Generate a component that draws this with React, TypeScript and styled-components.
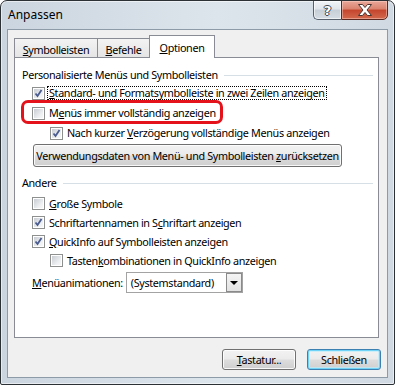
import React from 'react'
import styled, { createGlobalStyle } from 'styled-components'

const Global = createGlobalStyle`
  html, body { margin: 0; padding: 0; background: #fff; }
  body {
    font-family: "Noto Sans", "Open Sans", sans-serif;
    font-size: 10.8px;
    letter-spacing: -0.35px;
    color: #000;
  }
`

const Frame = styled.div`
  width: 395px;
  height: 385px;
  box-sizing: border-box;
  border: 1px solid #2c3136;
  border-radius: 7px 7px 2px 2px;
  background: linear-gradient(to right, #cbd5df, #dde5ec 55%, #d0d9e2);
  box-shadow: inset 0 0 0 1px rgba(255, 255, 255, 0.55);
  display: flex;
  flex-direction: column;
  padding: 0 6px 6px 6px;
  overflow: hidden;
`

const TitleBar = styled.div`
  height: 28px;
  display: flex;
  align-items: flex-start;
  justify-content: space-between;
`

const Title = styled.div`
  margin-top: 6px;
  padding-left: 1px;
  line-height: 16px;
  font-size: 12px;
  letter-spacing: 0;
  color: #000;
`

const CaptionButtons = styled.div`
  display: flex;
  margin-top: -1px;
  height: 20px;
`

const HelpButton = styled.div`
  width: 28px;
  box-sizing: border-box;
  border: 1px solid #56616d;
  border-right: none;
  border-radius: 0 0 0 5px;
  background: linear-gradient(#f2f5f8, #dfe5eb 45%, #c6ced7 50%, #d6dde4);
  box-shadow: inset 0 0 0 1px rgba(255, 255, 255, 0.6);
  display: flex;
  align-items: center;
  justify-content: center;
  font: bold 13px "DejaVu Sans", sans-serif;
  letter-spacing: 0;
  color: #fff;
  text-shadow: 1px 0 #3c4650, -1px 0 #3c4650, 0 1px #3c4650, 0 -1px #3c4650;
`

const CloseButton = styled.div`
  width: 47px;
  box-sizing: border-box;
  border: 1px solid #5a2a22;
  border-radius: 0 0 5px 0;
  background: linear-gradient(#eaa899, #d9826e 45%, #c5452d 50%, #d2694d);
  box-shadow: inset 0 0 0 1px rgba(255, 220, 210, 0.45);
  display: flex;
  align-items: center;
  justify-content: center;
`

const Client = styled.div`
  flex: 1;
  border: 1px solid #8d9aa7;
  background: #f0f0f0;
  display: flex;
  flex-direction: column;
  padding: 5px 6px 0 6px;
`

const TabStrip = styled.div`
  display: flex;
  align-items: flex-end;
  height: 22px;
  position: relative;
  z-index: 1;
`

const Tab = styled.div<{ $active?: boolean; $w: number }>`
  width: ${p => p.$w}px;
  box-sizing: border-box;
  height: ${p => (p.$active ? 23 : 19)}px;
  margin-bottom: ${p => (p.$active ? -1 : 0)}px;
  margin-left: -1px;
  &:first-child { margin-left: 0; }
  border: 1px solid #898c95;
  border-bottom: none;
  background: ${p => (p.$active ? '#fff' : 'linear-gradient(#f3f3f3, #e5e5e5)')};
  display: flex;
  justify-content: center;
  align-items: flex-start;
  padding-top: ${p => (p.$active ? 4 : 3)}px;
  line-height: 15px;
  position: relative;
  z-index: ${p => (p.$active ? 2 : 1)};
`

const Panel = styled.div`
  height: 281px;
  box-sizing: border-box;
  margin-right: 2px;
  border: 1px solid #898c95;
  background: #fff;
  padding: 9px 5px 0 7px;
  display: flex;
  flex-direction: column;
`

const GroupHeading = styled.div<{ $gap?: number }>`
  display: flex;
  align-items: center;
  height: 16px;
  line-height: 16px;
  margin-top: ${p => p.$gap ?? 0}px;
  gap: 6px;
  &::after {
    content: "";
    flex: 1;
    height: 1px;
    background: #d5dfe5;
  }
`

const Row = styled.div<{ $level?: number; $h?: number }>`
  display: flex;
  align-items: center;
  height: ${p => p.$h ?? 19}px;
  margin-left: ${p => (p.$level === 2 ? 28 : 10)}px;
  gap: 2px;
  position: relative;
`

const Highlight = styled.div`
  position: relative;
  &::after {
    content: "";
    position: absolute;
    left: -1px;
    top: -3px;
    width: 202px;
    height: 24px;
    box-sizing: border-box;
    border: 3px solid #e4121b;
    border-radius: 7px;
    pointer-events: none;
  }
`

const Box = styled.span`
  width: 13px;
  height: 13px;
  box-sizing: border-box;
  border: 1px solid #8e8f8f;
  background: #fff;
  flex: none;
  position: relative;
  &::before {
    content: "";
    position: absolute;
    inset: 1px;
    background: linear-gradient(135deg, #c9cdd3, #eef0f2 70%, #f7f7f7);
  }
  svg { position: absolute; left: -1px; top: -1px; }
`

const Label = styled.span<{ $focus?: boolean }>`
  border: 1px ${p => (p.$focus ? 'dotted #000' : 'solid transparent')};
  padding: 0 1px;
  line-height: 12px;
  white-space: nowrap;
`

const PushButton = styled.div<{ $w: number; $h?: number; $default?: boolean }>`
  width: ${p => p.$w}px;
  height: ${p => p.$h ?? 21}px;
  box-sizing: border-box;
  border: 1px solid ${p => (p.$default ? '#3c7fb1' : '#707070')};
  border-radius: 3px;
  background: linear-gradient(#f2f2f2, #ebebeb 48%, #dddddd 52%, #cfcfcf);
  box-shadow: ${p =>
    p.$default
      ? 'inset 0 0 0 1px #6fd3f7, inset 0 0 0 2px rgba(190, 235, 250, 0.7)'
      : 'inset 0 0 0 1px rgba(255, 255, 255, 0.85)'};
  display: flex;
  align-items: center;
  justify-content: center;
  white-space: nowrap;
  flex: none;
`

const ResetButton = styled(PushButton)`
  margin: 1px 0 0 11px;
`

const ComboRow = styled.div`
  display: flex;
  align-items: center;
  margin: 2px 0 0 10px;
  gap: 3px;
`

const Combo = styled.div`
  width: 117px;
  height: 21px;
  box-sizing: border-box;
  border: 1px solid #a3a3a3;
  background: #fff;
  display: flex;
  align-items: center;
  padding-left: 4px;
`

const ComboArrow = styled.div`
  margin-left: auto;
  width: 16px;
  height: 19px;
  box-sizing: border-box;
  border: 1px solid #8a8a8a;
  background: linear-gradient(#f4f4f4, #e2e2e2);
  display: flex;
  align-items: center;
  justify-content: center;
  &::before {
    content: "";
    border-left: 4px solid transparent;
    border-right: 4px solid transparent;
    border-top: 4px solid #000;
  }
`

const ButtonRow = styled.div`
  display: flex;
  justify-content: flex-end;
  gap: 11px;
  margin-top: 11px;
`

function CheckBox({ checked }: { checked?: boolean }) {
  return (
    <Box>
      {checked && (
        <svg width="13" height="13" viewBox="0 0 13 13">
          <path d="M3.5 6.5 L5.5 9 L9.5 3" fill="none" stroke="#4a5c8f" strokeWidth="1.8" />
        </svg>
      )}
    </Box>
  )
}

function Option({ checked, level, focus, h, children }: {
  checked?: boolean
  level?: number
  focus?: boolean
  h?: number
  children: React.ReactNode
}) {
  return (
    <Row $level={level} $h={h}>
      <CheckBox checked={checked} />
      <Label $focus={focus}>{children}</Label>
    </Row>
  )
}

export default function App() {
  return (
    <>
      <Global />
      <Frame>
        <TitleBar>
          <Title>Anpassen</Title>
          <CaptionButtons>
            <HelpButton>?</HelpButton>
            <CloseButton>
              <svg width="16" height="12" viewBox="0 0 16 12">
                <path
                  d="M1.5 0.5 H5.5 L8 3.5 L10.5 0.5 H14.5 L10 6 L14.5 11.5 H10.5 L8 8.5 L5.5 11.5 H1.5 L6 6 Z"
                  fill="#fff"
                  stroke="#4b3530"
                  strokeWidth="1"
                />
              </svg>
            </CloseButton>
          </CaptionButtons>
        </TitleBar>

        <Client>
          <TabStrip>
            <Tab $w={84}><span><u>S</u>ymbolleisten</span></Tab>
            <Tab $w={53}><span><u>B</u>efehle</span></Tab>
            <Tab $w={66} $active><span><u>O</u>ptionen</span></Tab>
          </TabStrip>

          <Panel>
            <GroupHeading>Personalisierte Menüs und Symbolleisten</GroupHeading>
            <Option checked focus h={20}>
              <u>S</u>tandard- und Formatsymbolleiste in zwei Zeilen anzeigen
            </Option>
            <Highlight>
              <Option h={20}>
                M<u>e</u>nüs immer vollständig anzeigen
              </Option>
            </Highlight>
            <Option checked level={2} h={20}>
              Nach kurzer <u>V</u>erzögerung vollständige Menüs anzeigen
            </Option>
            <ResetButton $w={309} $h={23}>
              Verwendungsdaten von Menü- und Symbolleisten&nbsp;<u>z</u>urücksetzen
            </ResetButton>

            <GroupHeading $gap={8}>Andere</GroupHeading>
            <div style={{ height: 3 }} />
            <Option><u>G</u>roße Symbole</Option>
            <Option checked>Schriftartennamen in S<u>c</u>hriftart anzeigen</Option>
            <Option checked><u>Q</u>uickInfo auf Symbolleisten anzeigen</Option>
            <Option level={2}>Tasten<u>k</u>ombinationen in QuickInfo anzeigen</Option>
            <ComboRow>
              <span><u>M</u>enüanimationen:</span>
              <Combo>
                (Systemstandard)
                <ComboArrow />
              </Combo>
            </ComboRow>
          </Panel>

          <ButtonRow>
            <PushButton $w={74}><span><u>T</u>astatur...</span></PushButton>
            <PushButton $w={74} $default>Schließen</PushButton>
          </ButtonRow>
        </Client>
      </Frame>
    </>
  )
}
